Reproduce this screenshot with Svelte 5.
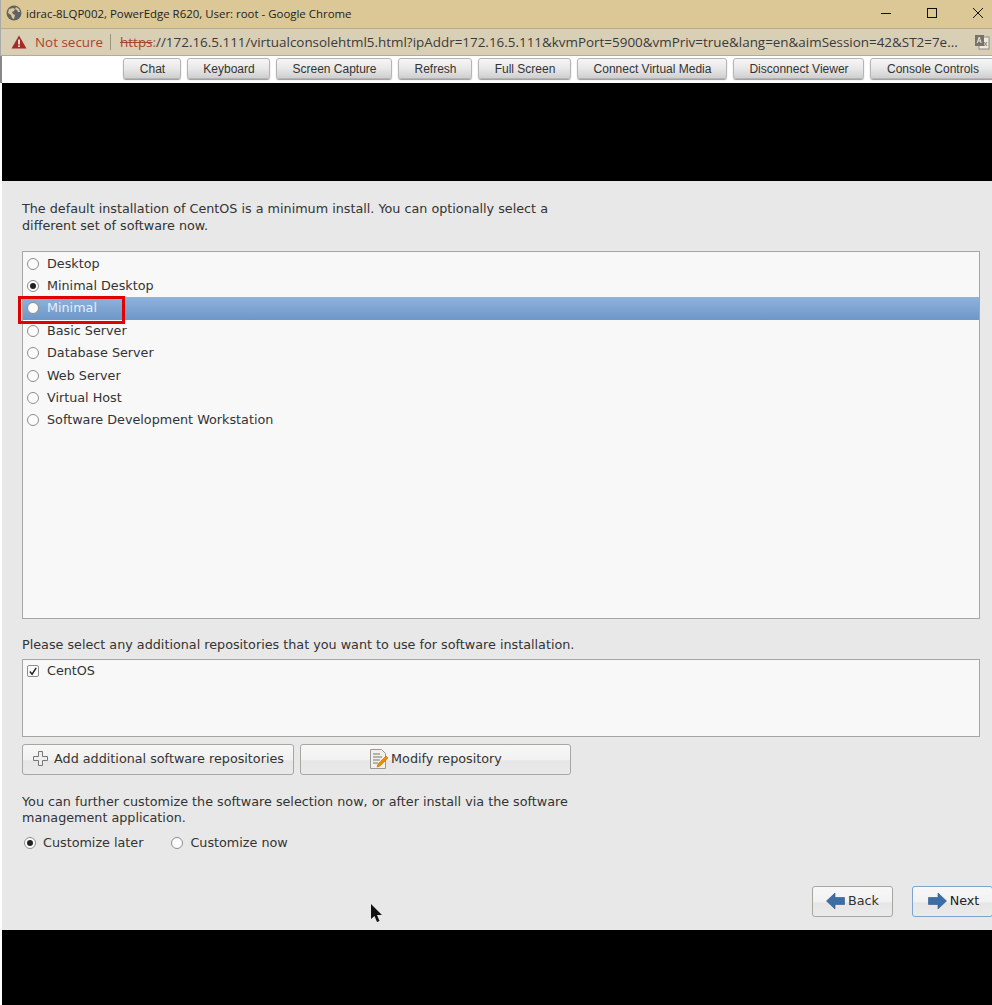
<script>
	const tools = [
		{ label: "Chat", width: 58 },
		{ label: "Keyboard", width: 83 },
		{ label: "Screen Capture", width: 116 },
		{ label: "Refresh", width: 74 },
		{ label: "Full Screen", width: 93 },
		{ label: "Connect Virtual Media", width: 150 },
		{ label: "Disconnect Viewer", width: 131 },
		{ label: "Console Controls", width: 125 }
	];

	const packages = [
		"Desktop",
		"Minimal Desktop",
		"Minimal",
		"Basic Server",
		"Database Server",
		"Web Server",
		"Virtual Host",
		"Software Development Workstation"
	];
	const checked = "Minimal Desktop";
	const selected = "Minimal";
</script>

<div class="window">
	<header class="titlebar">
		<svg class="globe" width="16" height="16" viewBox="0 0 16 16">
			<circle cx="8" cy="8" r="7.5" fill="#5f6368" />
			<path d="M3 4l4-1 2 1-1 2-2 1 1 2 2 1-1 4-2-1-1-3-3-2zM10 2l3 2 1 3-2 0-1-2-2-1z" fill="#dcc896" />
		</svg>
		<span class="title">idrac-8LQP002, PowerEdge R620, User: root - Google Chrome</span>
		<div class="controls">
			<svg width="12" height="12" viewBox="0 0 12 12"><path d="M1 6.5h10" stroke="#111" fill="none" /></svg>
			<svg width="12" height="12" viewBox="0 0 12 12"><rect x="1.5" y="1.5" width="9" height="9" stroke="#111" fill="none" /></svg>
			<svg width="12" height="12" viewBox="0 0 12 12"><path d="M1 1l10 10M11 1L1 11" stroke="#111" fill="none" /></svg>
		</div>
	</header>

	<div class="addressbar">
		<svg class="warn" width="16" height="14" viewBox="0 0 16 14">
			<path d="M8 0.5L15.5 13.5H0.5z" fill="#a52b25" />
			<rect x="7.2" y="4.5" width="1.6" height="5" fill="#fff" />
			<rect x="7.2" y="10.4" width="1.6" height="1.6" fill="#fff" />
		</svg>
		<span class="not-secure">Not secure</span>
		<span class="sep"></span>
		<span class="url"><span class="scheme">https</span><span class="colon">:</span>//172.16.5.111/virtualconsolehtml5.html?ipAddr=172.16.5.111&amp;kvmPort=5900&amp;vmPriv=true&amp;lang=en&amp;aimSession=42&amp;ST2=7e...</span>
		<svg class="translate" width="16" height="16" viewBox="0 0 16 16">
			<rect x="5" y="3" width="10" height="12" fill="#efeadb" stroke="#8c8c8c" />
			<rect x="1" y="1" width="9" height="11" fill="#77736a" />
			<path d="M3.2 9l2-6 2 6M4 7h2.600" stroke="#efeadb" fill="none" />
			<path d="M10 8l3 4M13 8l-3 4" stroke="#777" fill="none" />
		</svg>
	</div>

	<nav class="toolbar">
		{#each tools as tool}
			<button class="tool" style="width: {tool.width}px">{tool.label}</button>
		{/each}
	</nav>

	<div class="black top"></div>

	<main class="installer">
		<p class="intro">The default installation of CentOS is a minimum install. You can optionally select a<br />different set of software now.</p>

		<div class="list packages">
			{#each packages as name}
				<div class="row" class:selected={name === selected}>
					<span class="radio" class:on={name === checked}></span>
					<span>{name}</span>
				</div>
			{/each}
		</div>

		<p class="repo-label">Please select any additional repositories that you want to use for software installation.</p>

		<div class="list repos">
			<div class="repo">
				<span class="check">
					<svg width="11" height="11" viewBox="0 0 11 11"><path d="M2 5.500l2.500 3L9 1.500" stroke="#222" stroke-width="1.600" fill="none" /></svg>
				</span>
				<span>CentOS</span>
			</div>
		</div>

		<div class="repo-buttons">
			<button class="gtk add">
				<svg width="17" height="17" viewBox="0 0 17 17">
					<path d="M6.500 1.500h4v5h5v4h-5v5h-4v-5h-5v-4h5z" fill="#eee" stroke="#777" />
				</svg>
				Add additional software repositories
			</button>
			<button class="gtk modify">
				<svg width="20" height="22" viewBox="0 0 20 22">
					<path d="M1.500 1.500h11l4 4v15h-15z" fill="#f1efe6" stroke="#999" />
					<path d="M4 6h7M4 9h9M4 12h7M4 15h5" stroke="#777" fill="none" />
					<path d="M9 16l8-8 2 2-8 8-3 1z" fill="#f08c00" stroke="#b45f00" stroke-width="0.500" />
				</svg>
				Modify repository
			</button>
		</div>

		<p class="customize">You can further customize the software selection now, or after install via the software<br />management application.</p>

		<div class="choices">
			<div class="choice"><span class="radio on"></span>Customize later</div>
			<div class="choice"><span class="radio"></span>Customize now</div>
		</div>

		<div class="nav-buttons">
			<button class="gtk nav">
				<svg width="19" height="18" viewBox="0 0 19 18"><path d="M0.500 9L9 1v4.500h9.500v7H9V17z" fill="#3b6ea5" stroke="#2c5685" stroke-width="0.600" /></svg>
				Back
			</button>
			<button class="gtk nav next">
				<svg width="19" height="18" viewBox="0 0 19 18"><path d="M18.500 9L10 1v4.500H0.500v7H10V17z" fill="#3b6ea5" stroke="#2c5685" stroke-width="0.600" /></svg>
				Next
			</button>
		</div>
	</main>

	<div class="black bottom"></div>

	<!-- Marcacao vermelha sobre a linha Minimal -->
	<div class="mark"></div>

	<svg class="cursor" width="14" height="20" viewBox="0 0 14 20">
		<path d="M1 0v15l3.500-3 2.500 6 2.500-1-2.500-6h5z" fill="#111" />
	</svg>
</div>

<style>
	:global(body) {
		margin: 0;
		background: #fff;
	}

	.window {
		position: relative;
		width: 992px;
		height: 1005px;
		overflow: hidden;
	}

	.titlebar {
		height: 28px;
		box-sizing: border-box;
		background: #dcc896;
		display: flex;
		align-items: center;
		padding: 0 0 2px 5px;
		border-left: 1px solid #aaa;
	}

	.title {
		margin-left: 4px;
		font: 11.450px "Open Sans", sans-serif;
		color: #222;
	}

	.controls {
		margin-left: auto;
		display: flex;
		gap: 34px;
		padding-right: 8px;
	}

	.addressbar {
		height: 28px;
		box-sizing: border-box;
		background: #d9cfb5;
		border-top: 1px solid #b5ab92;
		border-bottom: 1px solid #b5ab92;
		border-left: 1px solid #aaa;
		display: flex;
		align-items: center;
		padding-left: 10px;
		font: 13.430px "Open Sans", sans-serif;
		white-space: nowrap;
	}

	.not-secure {
		margin-left: 8px;
		color: #a8442e;
	}

	.sep {
		width: 1px;
		height: 16px;
		background: #9c937c;
		margin: 0 9px 0 7px;
	}

	.url {
		color: #3a3a3a;
		flex: 1;
		overflow: hidden;
	}

	.scheme {
		color: #a8442e;
		text-decoration: line-through;
	}

	.colon {
		color: #777;
	}

	.translate {
		margin: 0 2px 0 6px;
		flex: none;
	}

	.toolbar {
		height: 27px;
		box-sizing: border-box;
		display: flex;
		gap: 6px;
		padding: 2px 0 0 121px;
		background: #fff;
		border-left: 2px solid #888;
		overflow: hidden;
	}

	.tool {
		flex: none;
		height: 21px;
		padding: 0 0 0 1px;
		border: 1px solid #b4b4b4;
		border-radius: 3px;
		background: linear-gradient(#f6f6f6, #e8e8e8 50%, #cfcfcf);
		box-shadow: 0 1px 1px #999;
		font: 12px "Liberation Sans", sans-serif;
		color: #333;
	}

	.black {
		background: #000;
		margin-left: 2px;
	}

	.black.top {
		height: 98px;
	}

	.black.bottom {
		height: 75px;
	}

	.installer {
		height: 749px;
		box-sizing: border-box;
		margin-left: 2px;
		padding: 20px 0 0 20px;
		background: #e8e8e8;
		font: 12.750px/16px "DejaVu Sans", sans-serif;
		color: #333;
	}

	p {
		margin: 0;
		line-height: 16.500px;
	}

	.list {
		box-sizing: border-box;
		width: 958px;
		background: #f8f8f8;
		border: 1px solid #a8a6a2;
	}

	.packages {
		height: 368px;
		margin-top: 17px;
		padding-top: 0.500px;
	}

	.row {
		height: 22.400px;
		display: flex;
		align-items: center;
		gap: 8px;
		padding-left: 4px;
	}

	.row.selected {
		background: linear-gradient(#8fb3dc, #6d97c8);
		color: #e6eef8;
	}

	.radio {
		flex: none;
		box-sizing: border-box;
		width: 12px;
		height: 12px;
		border: 1px solid #8d8d8d;
		border-radius: 50%;
		background: #fcfcfc;
		display: inline-flex;
		align-items: center;
		justify-content: center;
	}

	.radio.on::after {
		content: "";
		width: 6px;
		height: 6px;
		border-radius: 50%;
		background: #222;
	}

	.repo-label {
		margin-top: 17.500px;
	}

	.repos {
		height: 78px;
		margin-top: 5.500px;
		padding: 3px 0 0 4px;
	}

	.repo {
		display: flex;
		align-items: center;
		gap: 8px;
		height: 17px;
	}

	.check {
		box-sizing: border-box;
		width: 12px;
		height: 12px;
		border: 1px solid #8d8d8d;
		border-radius: 2px;
		background: #fcfcfc;
		display: flex;
		align-items: center;
		justify-content: center;
	}

	.repo-buttons {
		display: flex;
		gap: 6px;
		margin-top: 7px;
	}

	.gtk {
		height: 31px;
		box-sizing: border-box;
		padding: 0 0 1px;
		border: 1px solid #a8a6a2;
		border-radius: 3px;
		background: linear-gradient(#f7f7f7, #f2f2f2 50%, #e6e6e6 55%, #eaeaea);
		font: 12.750px "DejaVu Sans", sans-serif;
		color: #333;
		display: flex;
		align-items: center;
		justify-content: center;
	}

	.add {
		width: 272px;
		gap: 5px;
	}

	.modify {
		width: 271px;
		gap: 2px;
	}

	.customize {
		margin-top: 19px;
	}

	.choices {
		display: flex;
		gap: 28px;
		margin: 8px 0 0 2px;
	}

	.choice {
		display: flex;
		align-items: center;
		gap: 7px;
	}

	.nav-buttons {
		display: flex;
		justify-content: flex-end;
		gap: 19px;
		margin-top: 35px;
		margin-right: -1px;
	}

	.nav {
		width: 81px;
		gap: 3px;
	}

	.nav.next {
		border-color: #7ea3cc;
		color: #222;
		padding-left: 2px;
	}

	.mark {
		position: absolute;
		left: 18px;
		top: 296px;
		width: 107px;
		height: 28px;
		box-sizing: border-box;
		border: 3px solid #e30000;
	}

	.cursor {
		position: absolute;
		left: 370px;
		top: 904px;
	}
</style>
